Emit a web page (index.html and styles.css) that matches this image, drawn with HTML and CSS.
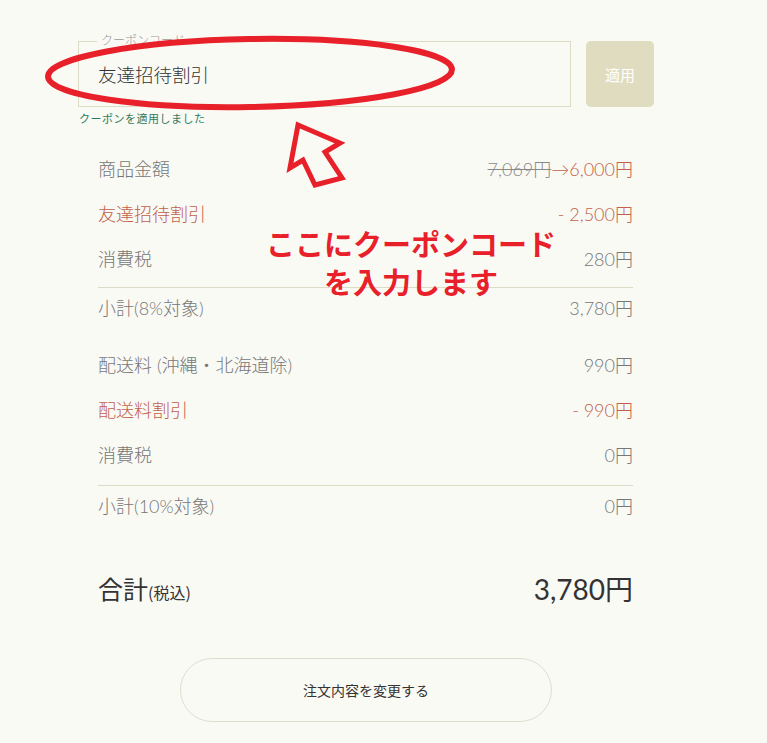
FILE: index.html
```html
<!DOCTYPE html>
<html lang="ja">
<head>
    <meta charset="UTF-8">
    <meta name="viewport" content="width=device-width, initial-scale=1.0">
    <title>ご注文内容の確認</title>
    <link rel="stylesheet" href="styles.css">
</head>
<body>
    <div class="page">
        <div class="coupon">
            <div class="coupon-row">
                <div class="coupon-field">
                    <span class="coupon-label">クーポンコード</span>
                    <span class="coupon-value">友達招待割引</span>
                </div>
                <button class="coupon-apply">適用</button>
            </div>
            <p class="coupon-note">クーポンを適用しました</p>
        </div>

        <div class="summary">
            <div class="group">
                <div class="row">
                    <span>商品金額</span>
                    <span><s class="old">7,069円</s><span class="discount">→6,000円</span></span>
                </div>
                <div class="row discount">
                    <span>友達招待割引</span>
                    <span>- 2,500円</span>
                </div>
                <div class="row">
                    <span>消費税</span>
                    <span>280円</span>
                </div>
            </div>
            <div class="row subtotal">
                <span>小計(8%対象)</span>
                <span>3,780円</span>
            </div>

            <div class="group second">
                <div class="row">
                    <span>配送料 (沖縄・北海道除)</span>
                    <span>990円</span>
                </div>
                <div class="row discount">
                    <span>配送料割引</span>
                    <span>- 990円</span>
                </div>
                <div class="row">
                    <span>消費税</span>
                    <span>0円</span>
                </div>
            </div>
            <div class="row subtotal last">
                <span>小計(10%対象)</span>
                <span>0円</span>
            </div>

            <div class="total">
                <span class="total-label">合計<small>(税込)</small></span>
                <span class="total-value">3,780円</span>
            </div>
        </div>

        <div class="actions">
            <button class="change-button">注文内容を変更する</button>
        </div>

        <!-- annotation drawn over the screenshot -->
        <svg class="marks" width="767" height="743" viewBox="0 0 767 743">
            <ellipse cx="250" cy="73" rx="202" ry="34" transform="rotate(-1 250 73)" fill="none" stroke="#e8202a" stroke-width="6"/>
            <polygon points="298,125 340,143 325,152 342,178 315,185 303,160 290,168" fill="none" stroke="#e8202a" stroke-width="5" stroke-linejoin="miter"/>
        </svg>
        <div class="callout">ここにクーポンコード<br>を入力します</div>
    </div>
</body>
</html>
```

FILE: styles.css
```css
body {
    margin: 0;
    background: #fafaf5;
    font-family: Lato, "Noto Sans CJK JP", sans-serif;
    font-weight: 300;
    color: #777;
}
.page {
    position: relative;
    width: 767px;
    height: 743px;
    overflow: hidden;
    padding: 41px 0 0 78px;
    box-sizing: border-box;
}
.coupon-row {
    display: flex;
    gap: 15px;
    width: 576px;
}
.coupon-field {
    position: relative;
    width: 493px;
    height: 66px;
    border: 1px solid #dddbc6;
    box-sizing: border-box;
    display: flex;
    align-items: center;
    padding-left: 19px;
}
.coupon-label {
    position: absolute;
    top: -9px;
    left: 18px;
    padding: 0 4px;
    background: #fafaf5;
    font-size: 12px;
    line-height: 16px;
    color: #999;
}
.coupon-value {
    font-family: "Noto Sans CJK JP", sans-serif;
    font-size: 18.5px;
    color: #333;
}
.coupon-apply {
    width: 68px;
    height: 66px;
    border: none;
    border-radius: 5px;
    background: #e0dcc0;
    color: #fff;
    font-family: "Noto Sans CJK JP", sans-serif;
    font-size: 15px;
    padding: 0;
}
.coupon-note {
    margin: 4px 0 0 1px;
    font-family: "Noto Sans CJK JP", sans-serif;
    font-weight: 400;
    font-size: 11px;
    line-height: 14px;
    color: #2f7a5c;
    letter-spacing: 0.5px;
}
.summary {
    width: 535px;
    margin: 20px 0 0 20px;
}
.row {
    display: flex;
    justify-content: space-between;
    align-items: center;
    height: 45px;
    font-size: 18px;
}
.discount {
    color: #c2604a;
}
.old {
    color: #888;
}
.subtotal {
    height: 38px;
    border-top: 1px solid #dddbc6;
    margin-top: 7px;
}
.subtotal.last {
    margin-top: 9px;
}
.group.second {
    margin-top: 15px;
}
.total {
    display: flex;
    justify-content: space-between;
    align-items: center;
    margin-top: 44px;
    color: #333;
    font-weight: 400;
}
.total-label {
    font-family: "Noto Sans CJK JP", sans-serif;
    font-size: 25px;
}
.total-label small {
    font-size: 16px;
}
.total-value {
    font-size: 28px;
}
.actions {
    width: 576px;
    display: flex;
    justify-content: center;
    margin-top: 50px;
}
.change-button {
    width: 372px;
    height: 64px;
    border: 1px solid #e0decb;
    border-radius: 32px;
    background: #fafaf5;
    font-family: "Noto Sans CJK JP", sans-serif;
    font-size: 14px;
    color: #333;
}
.marks {
    position: absolute;
    top: 0;
    left: 0;
    pointer-events: none;
}
.callout {
    position: absolute;
    top: 224px;
    left: 251px;
    width: 320px;
    text-align: center;
    font-family: "Noto Sans CJK JP", sans-serif;
    font-weight: 700;
    font-size: 29px;
    line-height: 38px;
    color: #e8202a;
}
```
